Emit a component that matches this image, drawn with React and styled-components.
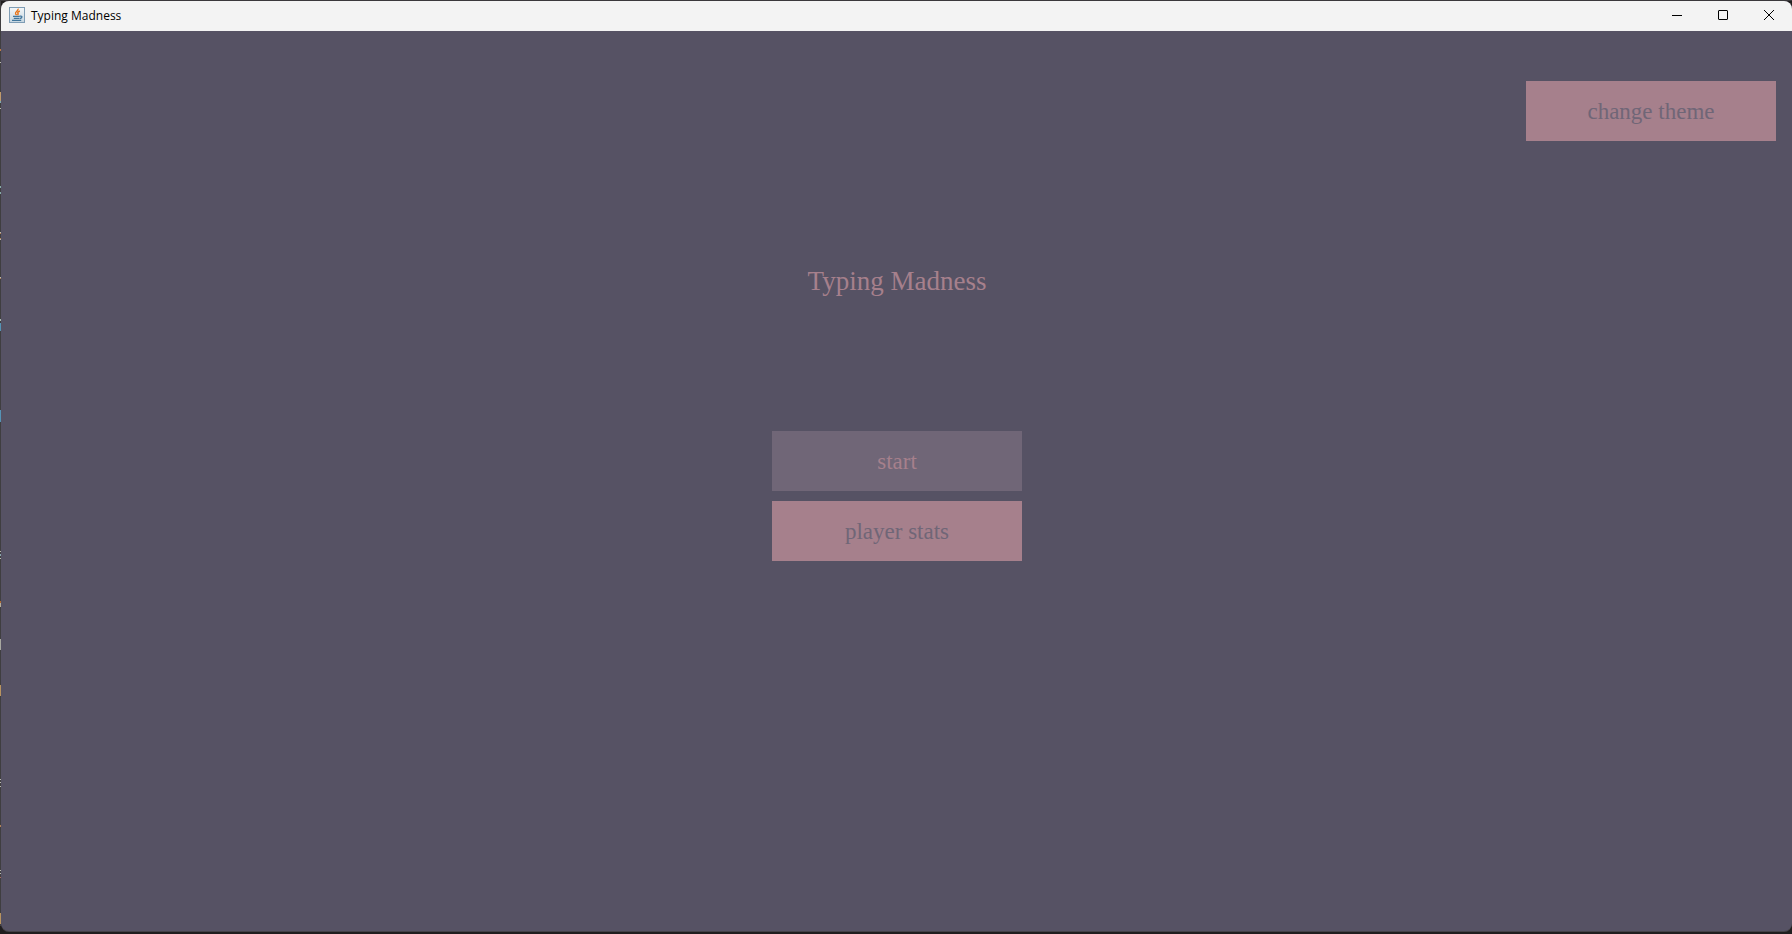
import React from "react";
import styled, { createGlobalStyle } from "styled-components";

// Slivers of the editor window behind, seen along the left edge: [top, height, colour]
const slivers = [
  [49, 2, "#c07a45"], [62, 1, "#b8b8b0"], [92, 9, "#c09a6b"], [101, 2, "#7fa9ae"],
  [108, 1, "#b8b8b0"], [186, 2, "#86aaa8"], [192, 2, "#86aaa8"], [232, 1, "#b8b8b0"], [233, 1, "#b08058"],
  [238, 1, "#b08058"], [239, 1, "#b8b8b0"], [277, 1, "#b8b8b0"], [278, 1, "#b08058"], [319, 2, "#a8b8b0"], [323, 8, "#5593b5"],
  [410, 12, "#5593b5"], [551, 1, "#b8b8b0"], [554, 2, "#8aa6b0"], [558, 1, "#b8b8b0"],
  [601, 2, "#b0692f"], [603, 4, "#b4ac98"], [639, 11, "#a8a8a0"], [685, 11, "#b8935f"],
  [779, 1, "#b8b8b0"], [782, 1, "#b8b8b0"], [786, 1, "#b8b8b0"], [825, 2, "#b08058"],
  [870, 1, "#b8b8b0"], [873, 1, "#b8b8b0"], [877, 1, "#b06a60"], [913, 11, "#b8935f"],
];
const sliverLayers = slivers
  .map(([top, height, color]) => `linear-gradient(${color},${color}) 0 ${top}px/1px ${height}px no-repeat`)
  .join(",");

const Global = createGlobalStyle`
  *{box-sizing:border-box}
  body{margin:0;background:#201e1f}
`;
const Desktop = styled.div`
  min-height:100vh;
  padding:1px 0 3px 1px;
  display:flex;
  background:
    ${sliverLayers},
    linear-gradient(#3a383b,#3a383b) 0 0/100% 1px no-repeat,
    linear-gradient(#3f3e40,#3f3e40) 0 0/1px calc(100% - 8px) no-repeat,
    #201e1f;
`;
const Window = styled.div`
  flex:1;
  display:flex;
  flex-direction:column;
  border-radius:8px;
  overflow:hidden;
  background:#565264;
  box-shadow:0 1px #454348;
`;
const TitleBar = styled.header`
  height:30px;
  display:flex;
  align-items:center;
  padding:0 0 2px 8px;
  background:#f3f3f3;
  color:#000;
  font:12px/16px "Open Sans","Noto Sans",sans-serif;
`;
const AppName = styled.span`
  flex:1;
  margin-left:6px;
  padding-top:2px;
`;
const Control = styled.button`
  width:46px;
  height:28px;
  padding:0;
  border:0;
  display:grid;
  place-items:center;
  background:transparent;
  color:#000;
`;
const Client = styled.main`
  flex:1;
  display:flex;
  flex-direction:column;
  align-items:center;
  padding:50px 16px 50px 17px;
  font-family:"Palatino Linotype","Book Antiqua","Liberation Serif",serif;
`;
const Title = styled.h1`
  margin:124px 0 134px;
  font-size:27px;
  line-height:32px;
  font-weight:400;
  color:#a6808c;
`;
const Menu = styled.nav`
  display:flex;
  flex-direction:column;
  gap:10px;
`;
const MenuButton = styled.button`
  width:250px;
  height:60px;
  padding:2px 0 0;
  border:0;
  font-family:inherit;
  font-size:23px;
  line-height:28px;
  background:${(p) => (p.$active ? "#706677" : "#a6808c")};
  color:${(p) => (p.$active ? "#a6808c" : "#706677")};
`;
const ThemeButton = styled(MenuButton)`
  align-self:flex-end;
`;

const JavaIcon = () => (
  <svg width="16" height="16" viewBox="0 0 16 16" aria-hidden="true">
    <defs>
      <linearGradient id="tile" x1="0" y1="0" x2="0" y2="1">
        <stop offset="0" stopColor="#f4f7f9" />
        <stop offset="1" stopColor="#c6d6e0" />
      </linearGradient>
    </defs>
    <rect x="0.5" y="0.5" width="15" height="15" fill="url(#tile)" stroke="#7f9db5" />
    <path d="M9 1.6C10 3.8 5.6 4.7 6.6 6.8L7.6 8.2M10.8 4C8.2 5.2 8.4 6 9.2 6.9L8.6 8.2" fill="none" stroke="#e8751a" strokeWidth="1.4" />
    <path d="M4 9.3H10.8M4.8 11.3H10.4M3 13.4H12.2M10.9 9.2C13.8 8.6 13.4 11.1 10.8 11.5" fill="none" stroke="#41769c" strokeWidth="1.3" />
  </svg>
);

export default function App() {
  return (
    <>
      <Global />
      <Desktop>
        <Window>
          <TitleBar>
            <JavaIcon />
            <AppName>Typing Madness</AppName>
            <Control aria-label="Minimize">
              <svg width="10" height="10"><path d="M0 5.5H10" stroke="currentColor" /></svg>
            </Control>
            <Control aria-label="Maximize">
              <svg width="10" height="10"><rect x="0.5" y="0.5" width="9" height="9" rx="0.5" fill="none" stroke="currentColor" /></svg>
            </Control>
            <Control aria-label="Close">
              <svg width="10" height="10"><path d="M0 0L10 10M10 0L0 10" stroke="currentColor" /></svg>
            </Control>
          </TitleBar>
          <Client>
            <ThemeButton>change theme</ThemeButton>
            <Title>Typing Madness</Title>
            <Menu>
              <MenuButton $active>start</MenuButton>
              <MenuButton>player stats</MenuButton>
            </Menu>
          </Client>
        </Window>
      </Desktop>
    </>
  );
}
